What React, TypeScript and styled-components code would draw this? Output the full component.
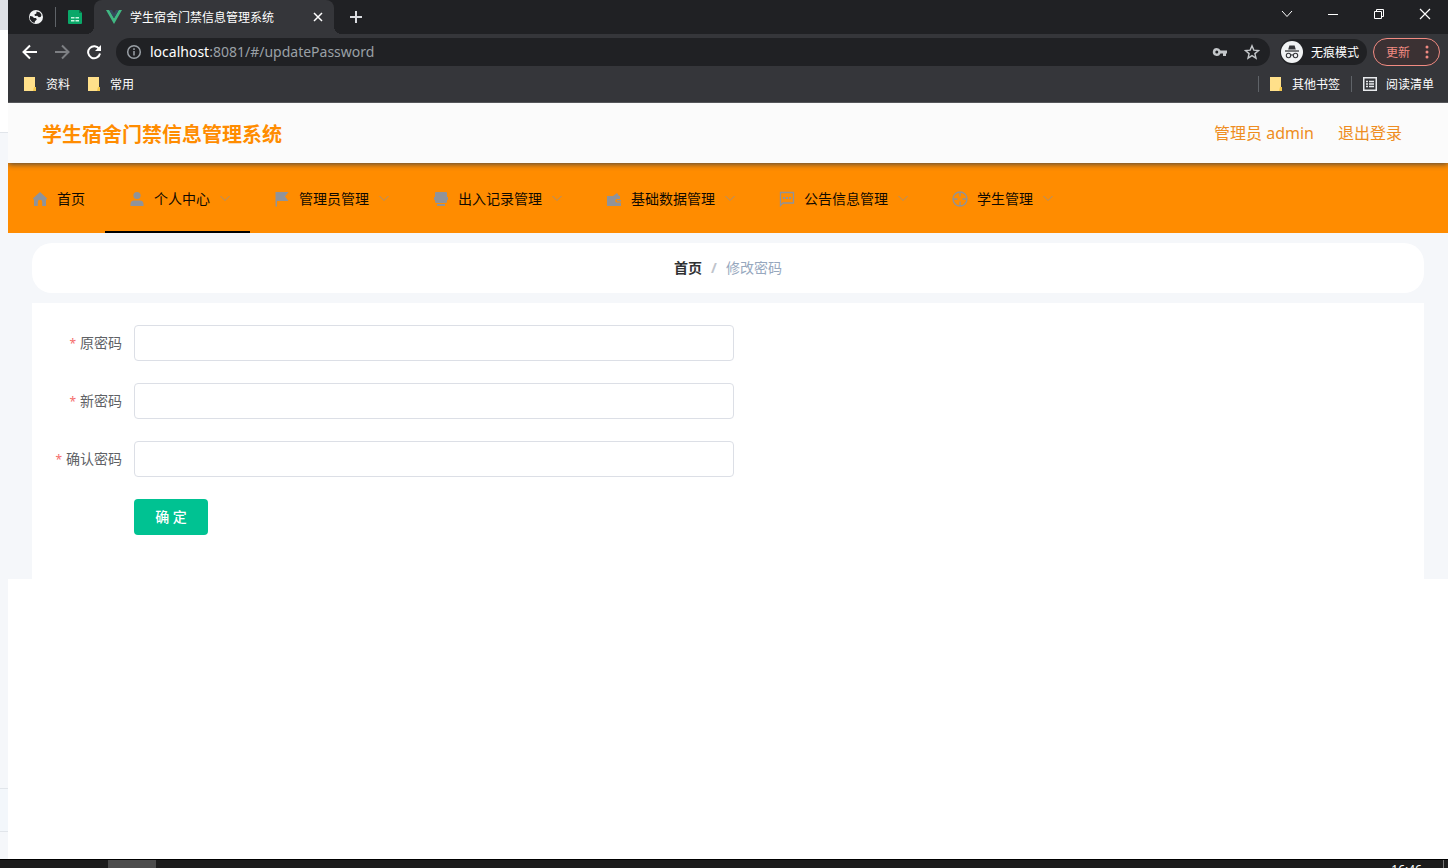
import React from "react";
import styled, { createGlobalStyle, css } from "styled-components";

const GlobalStyle = createGlobalStyle`
  *, *::before, *::after { box-sizing: border-box; }
  body {
    margin: 0;
    background: #fff;
    font-family: "Noto Sans", "Noto Sans CJK SC", sans-serif;
    font-size: 14px;
  }
  button { font: inherit; border: 0; margin: 0; padding: 0; background: none; color: inherit; cursor: pointer; }
  a { color: inherit; text-decoration: none; }
  svg { display: block; flex: none; }
`;

const Desktop = styled.div`
  display: flex;
  flex-direction: column;
  min-height: 100vh;
`;
const Workspace = styled.div`
  display: flex;
  flex: 1;
`;
const BackWindow = styled.div`
  display: flex;
  flex-direction: column;
  width: 8px;
  flex: none;
  background: #f5f7fa;
`;
const BackBand = styled.div<{ $h?: number; $bg: string; $line?: boolean }>`
  ${(p) => (p.$h ? `height: ${p.$h}px;` : "flex: 1;")}
  background: ${(p) => p.$bg};
  border-bottom: ${(p) => (p.$line ? "1px solid #e1e5ea" : "0")};
`;
const Browser = styled.div`
  flex: 1;
  min-width: 0;
  background: #fff;
`;

const TabStrip = styled.div`
  display: flex;
  height: 34px;
  background: #202124;
  color: #fff;
`;
const PinnedTab = styled.button<{ $divider?: boolean }>`
  display: flex;
  align-items: center;
  justify-content: center;
  width: ${(p) => (p.$divider ? 39 : 38)}px;
  height: 34px;
`;
const PinnedTabs = styled.div`
  display: flex;
  align-items: center;
  padding-left: 8px;
`;
const Divider = styled.span<{ $h: number }>`
  width: 1px;
  height: ${(p) => p.$h}px;
  background: #5f6368;
`;
const ActiveTab = styled.div`
  position: relative;
  display: flex;
  align-items: center;
  width: 240px;
  height: 34px;
  padding: 0 8px 0 12px;
  gap: 8px;
  border-radius: 8px 8px 0 0;
  background: #35363a;
  font-size: 12px;
  line-height: 16px;
  &::before, &::after {
    content: "";
    position: absolute;
    bottom: 0;
    width: 8px;
    height: 8px;
  }
  &::before { left: -8px; background: radial-gradient(circle at 0 0, transparent 8px, #35363a 8px); }
  &::after { right: -8px; background: radial-gradient(circle at 100% 0, transparent 8px, #35363a 8px); }
`;
const TabTitle = styled.span`
  flex: 1;
  padding-top: 2px;
  white-space: nowrap;
`;
const SmallButton = styled.button<{ $w: number }>`
  display: flex;
  align-items: center;
  justify-content: center;
  width: ${(p) => p.$w}px;
  height: 100%;
`;
const WindowControls = styled.div`
  display: flex;
  height: 28px;
  margin-left: auto;
`;

const Toolbar = styled.div`
  display: flex;
  align-items: center;
  height: 36px;
  padding: 0 8px 0 6px;
  background: #35363a;
  color: #fff;
`;
const Omnibox = styled.div`
  display: flex;
  align-items: center;
  flex: 1;
  height: 28px;
  margin: 0 10px 0 6px;
  padding: 0 2px 0 10px;
  border-radius: 14px;
  background: #202124;
`;
const Address = styled.div`
  flex: 1;
  margin-left: 8px;
  color: #9aa0a6;
  font-size: 14px;
  line-height: 20px;
  outline: none;
  span { color: #fff; }
`;
const Incognito = styled.button`
  display: flex;
  align-items: center;
  gap: 8px;
  height: 26px;
  margin-right: 6px;
  padding: 0 8px 0 1px;
  border-radius: 13px;
  background: #202124;
  font-size: 12px;
  white-space: nowrap;
`;
const Update = styled.button`
  display: flex;
  align-items: center;
  justify-content: space-between;
  width: 67px;
  height: 28px;
  padding: 0 10px 0 12px;
  border: 1px solid #f28b82;
  border-radius: 14px;
  color: #f28b82;
  background: #3b3133;
  font-size: 12px;
`;
const Bookmarks = styled.div`
  display: flex;
  align-items: center;
  height: 33px;
  padding: 0 14px 4px 16px;
  background: #35363a;
  border-bottom: 1px solid #55565a;
  color: #fff;
  font-size: 12px;
`;
const Bookmark = styled.button`
  display: flex;
  align-items: center;
  gap: 9px;
  line-height: 18px;
  white-space: nowrap;
  span { padding-top: 2px; }
`;
const BookmarkStart = styled.div`
  display: flex;
  gap: 18px;
`;
const BookmarkEnd = styled.div`
  display: flex;
  align-items: center;
  gap: 11px;
  margin-left: auto;
`;

const AppHeader = styled.header`
  position: relative;
  z-index: 1;
  display: flex;
  align-items: center;
  justify-content: space-between;
  height: 60px;
  padding: 0 46px 0 34px;
  background: #fbfbfb;
  box-shadow: 0 1px 6px #444;
  clip-path: inset(0 0 -8px 0);
  color: #ff8c00;
`;
const SystemTitle = styled.h1`
  margin: 0;
  padding-top: 4px;
  font-size: 20px;
  line-height: 28px;
  font-weight: 700;
`;
const Account = styled.div`
  display: flex;
  gap: 24px;
  font-size: 16px;
  line-height: 24px;
  color: #ee8d22;
`;
const Nav = styled.nav`
  display: flex;
  height: 70px;
  background: #ff8c00;
`;
const menuItem = css<{ $active?: boolean }>`
  display: flex;
  align-items: center;
  height: 70px;
  padding: 4px 20px 0;
  border-bottom: 2px solid ${(p) => (p.$active ? "#000" : "transparent")};
  color: #100a00;
  font-size: 14px;
  line-height: 20px;
  white-space: nowrap;
  > svg:first-child { margin: 0 9px 0 4px; }
`;
const MenuLink = styled.a<{ $active?: boolean }>`${menuItem}`;
const MenuButton = styled.button<{ $active?: boolean }>`
  ${menuItem}
  > svg:last-child { margin: 0 -1px 0 9px; }
`;

const Page = styled.main`
  padding: 10px 24px 0;
  background: #f5f7fa;
`;
const Crumbs = styled.nav`
  display: flex;
  align-items: center;
  justify-content: center;
  gap: 9px;
  height: 50px;
  padding-bottom: 2px;
  border-radius: 20px;
  background: #fff;
  color: #97a8be;
  font-size: 14px;
  a { color: #303133; font-weight: 700; }
  span { color: #c0c4cc; font-weight: 700; }
`;
const Panel = styled.form`
  display: flex;
  flex-direction: column;
  gap: 22px;
  min-height: 276px;
  margin-top: 10px;
  padding: 22px 0;
  background: #fff;
`;
const Field = styled.div`
  display: flex;
  align-items: center;
  width: 702px;
  max-width: 100%;
`;
const Label = styled.label`
  width: 102px;
  flex: none;
  padding-right: 12px;
  color: #606266;
  text-align: right;
  line-height: 20px;
  &::before { content: "*"; margin-right: 4px; color: #f56c6c; font-size: 12px; }
`;
const Input = styled.input`
  flex: 1;
  min-width: 0;
  height: 36px;
  padding: 0 15px;
  border: 1px solid #dcdfe6;
  border-radius: 4px;
  background: #fff;
  color: #606266;
  font: inherit;
  outline: none;
`;
const Submit = styled.button`
  align-self: flex-start;
  width: 74px;
  height: 36px;
  margin-left: 102px;
  padding-bottom: 2px;
  border-radius: 4px;
  background: #00c292;
  color: #fff;
  font-weight: 500;
`;

const Taskbar = styled.footer`
  display: flex;
  height: 9px;
  overflow: hidden;
  border-top: 1px solid #000;
  background: #1c1c1c;
  color: #fff;
  font-size: 12px;
  line-height: 16px;
`;
const TaskItem = styled.button`
  width: 48px;
  height: 40px;
  margin-left: 108px;
  background: #4c4c4c;
`;
const Clock = styled.time`
  margin: 2px 21px 0 auto;
`;
const DesktopPeek = styled.button`
  width: 5px;
  height: 40px;
  border-left: 1px solid #777;
`;

const GRAY = "#909399";

const GlobeIcon = () => (
  <svg width="16" height="16" viewBox="0 0 16 16">
    <circle cx="8" cy="8" r="7" fill="#f1f3f4" />
    <path d="M2 7 4.500 7.500 6 9 8 9 8.800 10.500 7 12.200 6.500 14 4 13 1.800 10ZM8.500 2.500 12 3.500 13.500 6 12.600 8 10.800 8.300 9.200 6.800 7 7 6.400 5.400 8.400 4.600Z" fill="#202124" />
  </svg>
);
const SheetIcon = () => (
  <svg width="14" height="14" viewBox="0 0 14 14">
    <path d="M1 0h10l3 3v10a1 1 0 0 1-1 1H1a1 1 0 0 1-1-1V1a1 1 0 0 1 1-1Z" fill="#0aa869" />
    <path d="M11 0v3h3Z" fill="#07794b" />
    <path d="M3 7h3.500v1.500H3ZM7.500 7H11v1.500H7.500ZM3 10h3.500v1.500H3ZM7.500 10H11v1.500H7.500Z" fill="#c5f3de" />
  </svg>
);
const VueIcon = () => (
  <svg width="16" height="16" viewBox="0 0 16 16">
    <path d="M0 1h3.200L8 9.300 12.800 1H16L8 15Z" fill="#41b883" />
    <path d="M3.200 1H6l2 3.400L10 1h2.800L8 9.300Z" fill="#35495e" />
  </svg>
);
const Stroke = ({ d, size = 16, color = "#fff", w = 2 }: { d: string; size?: number; color?: string; w?: number }) => (
  <svg width={size} height={size} viewBox={`0 0 ${size} ${size}`} fill="none" stroke={color} strokeWidth={w}>
    <path d={d} />
  </svg>
);
const ReloadIcon = () => (
  <svg width="16" height="16" viewBox="0 0 16 16">
    <path d="M13.300 5.200A6 6 0 1 0 14 9.500" fill="none" stroke="#fff" strokeWidth="2" />
    <path d="M15 1v6H9Z" fill="#fff" />
  </svg>
);
const InfoIcon = () => (
  <svg width="16" height="16" viewBox="0 0 16 16" fill="none" stroke="#9aa0a6" strokeWidth="1.500">
    <circle cx="8" cy="8" r="6.300" />
    <path d="M8 7v4.500M8 4.300v1.600" />
  </svg>
);
const KeyIcon = () => (
  <svg width="16" height="16" viewBox="0 0 16 16">
    <path fillRule="evenodd" d="M4.800 4a4 4 0 0 1 3.700 2.500H15v3h-1V12h-3V9.500H8.500A4 4 0 1 1 4.800 4Zm0 2.500a1.500 1.500 0 1 0 0 3 1.500 1.500 0 0 0 0-3Z" fill="#c4c7ca" />
  </svg>
);
const StarIcon = () => (
  <svg width="16" height="16" viewBox="0 0 16 16" fill="none" stroke="#c4c7ca" strokeWidth="1.400">
    <path d="m8 1.800 1.800 4.300 4.700.4-3.600 3.100 1.100 4.600L8 11.700l-4 2.500 1.100-4.600L1.500 6.500l4.700-.4Z" />
  </svg>
);
const IncognitoIcon = () => (
  <svg width="22" height="22" viewBox="0 0 22 22">
    <circle cx="11" cy="11" r="11" fill="#f1f3f4" />
    <path d="m7.200 8.500 1.200-4h5.200l1.200 4Z" fill="#35363a" />
    <path d="M4 10h14" stroke="#35363a" strokeWidth="1.300" />
    <g fill="none" stroke="#35363a" strokeWidth="1.100">
      <circle cx="7.500" cy="14.500" r="2.200" />
      <circle cx="14.500" cy="14.500" r="2.200" />
      <path d="M9.700 14.200q1.300-.8 2.600 0" />
    </g>
  </svg>
);
const DotsIcon = () => (
  <svg width="4" height="14" viewBox="0 0 4 14" fill="#f28b82">
    <circle cx="2" cy="2" r="1.500" /><circle cx="2" cy="7" r="1.500" /><circle cx="2" cy="12" r="1.500" />
  </svg>
);
const FolderIcon = () => (
  <svg width="13" height="14" viewBox="0 0 13 14">
    <path d="M0 0h11v10l1 1v3H0Z" fill="#ffe08a" />
    <path d="M10 10h2v4H9Z" fill="#f4c84c" />
  </svg>
);
const ListIcon = () => (
  <svg width="14" height="14" viewBox="0 0 14 14" fill="none" stroke="#e8eaed">
    <rect x="0.750" y="0.750" width="12.500" height="12.500" strokeWidth="1.500" />
    <path d="M3 4.500h2M6 4.500h5M3 7h2M6 7h5M3 9.500h2M6 9.500h5" strokeWidth="1.400" />
  </svg>
);
const ArrowIcon = () => (
  <svg width="12" height="12" viewBox="0 0 12 12" fill="none" stroke={GRAY} strokeWidth="1" opacity="0.800">
    <path d="m1.500 3 4.500 4.500L10.500 3" />
  </svg>
);
const MenuIcon = ({ name }: { name: string }) => (
  <svg width="16" height="16" viewBox="0 0 16 16" fill={GRAY}>
    {name === "home" && <path d="M8 1 15.200 7.500 14 8.800V15H10.200v-4a2.200 2.200 0 0 0-4.400 0v4H2V8.800L.8 7.500Z" />}
    {name === "user" && <><circle cx="8" cy="4.500" r="3.600" /><path d="M1.500 15v-2A3.500 3.500 0 0 1 5 9.500h6a3.500 3.500 0 0 1 3.500 3.500v2Z" /></>}
    {name === "flag" && <path d="M1.500 1H14.500l-3.500 4.500 3.500 4.500H3v5.500H1.500Z" />}
    {name === "record" && <path d="M3 1h10a1 1 0 0 1 1 1v8.500a1.500 1.500 0 0 1-1.500 1.500h-9A1.500 1.500 0 0 1 2 10.500V2a1 1 0 0 1 1-1ZM1 6h14v3H1ZM4 13h8v2H4Z" />}
    {name === "wallet" && <path fillRule="evenodd" d="M1 5h6l4-3 2 3h1v3h-3a1.800 1.800 0 0 0 0 3.600h4V15H1ZM11.500 9H15v1.600h-3.500a.8.8 0 0 1 0-1.600Z" />}
    {name === "chat" && <><path d="M1.500 14.500v-13h13V12H4Z" fill="none" stroke={GRAY} strokeWidth="1.300" /><path d="M4 6h2v2H4ZM7 6h2v2H7ZM10 6h2v2h-2Z" /></>}
    {name === "aim" && <g fill="none" stroke={GRAY} strokeWidth="1.300"><circle cx="8" cy="8" r="7" /><path d="M8 1v4.500M8 10.500V15M1 8h4.500M10.500 8H15" /></g>}
  </svg>
);

const menus = [
  { icon: "user", text: "个人中心", active: true },
  { icon: "flag", text: "管理员管理" },
  { icon: "record", text: "出入记录管理" },
  { icon: "wallet", text: "基础数据管理" },
  { icon: "chat", text: "公告信息管理" },
  { icon: "aim", text: "学生管理" },
];
const fields = [
  { id: "oldPassword", text: "原密码" },
  { id: "newPassword", text: "新密码" },
  { id: "confirmPassword", text: "确认密码" },
];

export default function App() {
  return (
    <Desktop>
      <GlobalStyle />
      <Workspace>
        <BackWindow>
          <BackBand $h={30} $bg="#dee1e6" />
          <BackBand $h={103} $bg="#fff" $line />
          <BackBand $bg="#f5f7fa" $line />
          <BackBand $h={43} $bg="#f3f7fb" $line />
          <BackBand $h={27} $bg="#f5f7fa" />
        </BackWindow>
        <Browser>
          <TabStrip>
            <PinnedTabs>
              <PinnedTab $divider aria-label="Globe tab"><GlobeIcon /></PinnedTab>
              <Divider $h={20} />
              <PinnedTab aria-label="Sheet tab"><SheetIcon /></PinnedTab>
            </PinnedTabs>
            <ActiveTab>
              <VueIcon />
              <TabTitle>学生宿舍门禁信息管理系统</TabTitle>
              <SmallButton $w={16} aria-label="Close tab"><Stroke size={10} d="M1 1l8 8M9 1 1 9" w={1.5} /></SmallButton>
            </ActiveTab>
            <SmallButton $w={44} aria-label="New tab"><Stroke size={14} d="M7 1v12M1 7h12" w={2} color="#dadce0" /></SmallButton>
            <WindowControls>
              <SmallButton $w={46} aria-label="Search tabs"><Stroke size={12} d="m1 3 5 5.500L11 3" w={1} /></SmallButton>
              <SmallButton $w={46} aria-label="Minimize"><Stroke size={12} d="M1 6.500h10" w={1} /></SmallButton>
              <SmallButton $w={46} aria-label="Restore"><Stroke size={12} d="M1.500 3.500h7v7h-7ZM3.500 3.500v-2h7v7h-2" w={1} /></SmallButton>
              <SmallButton $w={46} aria-label="Close"><Stroke size={12} d="m1 1 10 10M11 1 1 11" w={1.2} /></SmallButton>
            </WindowControls>
          </TabStrip>
          <Toolbar>
            <SmallButton $w={32} aria-label="Back"><Stroke d="M15 8H2M8 1.500 1.500 8 8 14.500" /></SmallButton>
            <SmallButton $w={32} aria-label="Forward"><Stroke d="M1 8h13M8 1.500 14.500 8 8 14.500" color="#7d7f83" /></SmallButton>
            <SmallButton $w={32} aria-label="Reload"><ReloadIcon /></SmallButton>
            <Omnibox>
              <InfoIcon />
              <Address role="textbox" aria-label="Address" tabIndex={0}><span>localhost</span>:8081/#/updatePassword</Address>
              <SmallButton $w={32} aria-label="Passwords"><KeyIcon /></SmallButton>
              <SmallButton $w={32} aria-label="Bookmark page"><StarIcon /></SmallButton>
            </Omnibox>
            <Incognito><IncognitoIcon />无痕模式</Incognito>
            <Update>更新<DotsIcon /></Update>
          </Toolbar>
          <Bookmarks>
            <BookmarkStart>
              <Bookmark><FolderIcon /><span>资料</span></Bookmark>
              <Bookmark><FolderIcon /><span>常用</span></Bookmark>
            </BookmarkStart>
            <BookmarkEnd>
              <Divider $h={16} />
              <Bookmark><FolderIcon /><span>其他书签</span></Bookmark>
              <Divider $h={16} />
              <Bookmark><ListIcon /><span>阅读清单</span></Bookmark>
            </BookmarkEnd>
          </Bookmarks>

          <AppHeader>
            <SystemTitle>学生宿舍门禁信息管理系统</SystemTitle>
            <Account>
              <span>管理员 admin</span>
              <a href="#/login">退出登录</a>
            </Account>
          </AppHeader>
          <Nav>
            <MenuLink href="#/"><MenuIcon name="home" />首页</MenuLink>
            {menus.map((m) => (
              <MenuButton key={m.icon} $active={m.active}>
                <MenuIcon name={m.icon} />{m.text}<ArrowIcon />
              </MenuButton>
            ))}
          </Nav>
          <Page>
            <Crumbs aria-label="Breadcrumb">
              <a href="#/">首页</a><span>/</span>修改密码
            </Crumbs>
            <Panel onSubmit={(e) => e.preventDefault()}>
              {fields.map((f) => (
                <Field key={f.id}>
                  <Label htmlFor={f.id}>{f.text}</Label>
                  <Input id={f.id} type="password" />
                </Field>
              ))}
              <Submit type="submit">确 定</Submit>
            </Panel>
          </Page>
        </Browser>
      </Workspace>
      <Taskbar>
        <TaskItem aria-label="Running application" />
        <Clock>16:46</Clock>
        <DesktopPeek aria-label="Show desktop" />
      </Taskbar>
    </Desktop>
  );
}
